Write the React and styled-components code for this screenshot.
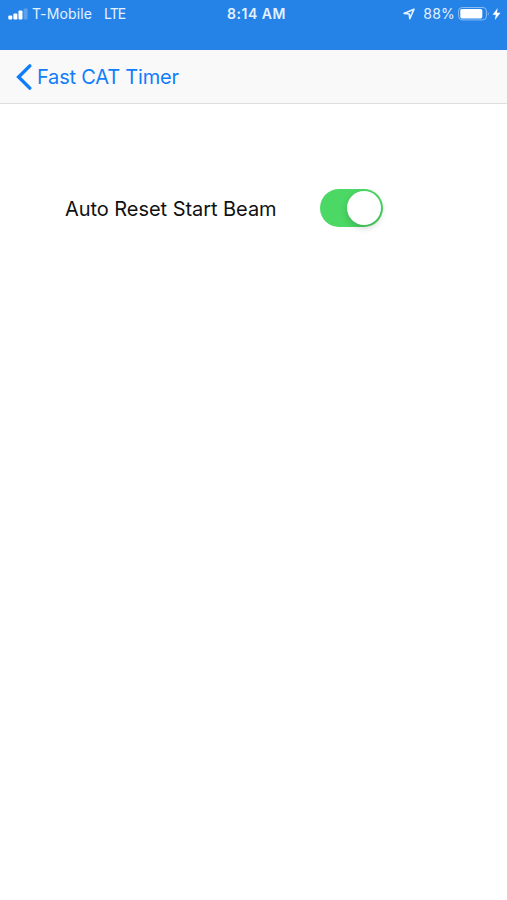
import React, { useState } from "react";
import styled, { createGlobalStyle } from "styled-components";

const palette = {
  bar: "#2583e8",
  tint: "#107efa",
  green: "#4bd865",
  nav: "#f9f9f9",
  line: "#dedede",
};

const GlobalStyle = createGlobalStyle`
  * {
    box-sizing: border-box;
  }
  body {
    margin: 0;
    background-color: #fff;
    font-family: Inter, "Liberation Sans", sans-serif;
  }
`;

const Screen = styled.div`
  display: flex;
  flex-direction: column;
  height: 900px;
  overflow: hidden;
  background-color: #fff;
`;

const StatusBar = styled.header`
  display: grid;
  grid-template-columns: 1fr auto 1fr;
  align-items: start;
  height: 50px;
  padding: 4px 6px 0 8px;
  background-color: ${palette.bar};
  color: #e4f1ff;
  font-size: 14px;
  line-height: 20px;
`;

const StatusGroup = styled.div`
  display: flex;
  align-items: center;
  justify-content: ${(props) => (props.$end ? "flex-end" : "flex-start")};
  height: 20px;
`;

const StatusText = styled.span`
  margin-left: ${(props) => props.$left || 0}px;
  letter-spacing: ${(props) => props.$spacing || 0}px;
  white-space: nowrap;
`;

const Clock = styled.time`
  padding-left: 4px;
  font-weight: 600;
  letter-spacing: 0.5px;
`;

const StatusIcon = styled.svg`
  display: block;
  flex: none;
  margin-left: ${(props) => props.$left || 0}px;
`;

const NavBar = styled.nav`
  display: flex;
  align-items: center;
  height: 54px;
  padding-left: 16px;
  background-color: ${palette.nav};
  border-bottom: 1px solid ${palette.line};
`;

const BackButton = styled.button`
  display: flex;
  align-items: center;
  gap: 5px;
  padding: 0;
  border: 0;
  background: none;
  color: ${palette.tint};
  font: inherit;
  font-size: 20px;
  line-height: 28px;
  letter-spacing: -0.2px;
  cursor: pointer;
`;

const Content = styled.main`
  flex: 1;
  padding: 85px 0 0 65px;
`;

const SettingRow = styled.div`
  display: flex;
  align-items: center;
  height: 38px;
`;

const SettingLabel = styled.span`
  width: 255px;
  padding-top: 2px;
  color: #111;
  font-size: 20px;
  line-height: 24px;
  letter-spacing: -0.05px;
  white-space: nowrap;
`;

const Switch = styled.button`
  display: flex;
  align-items: center;
  justify-content: ${(props) => (props.$on ? "flex-end" : "flex-start")};
  width: 62.5px;
  height: 38px;
  padding: 2px;
  border: 0;
  border-radius: 19px;
  background-color: ${(props) => (props.$on ? palette.green : "#e5e5e5")};
  cursor: pointer;
`;

const Knob = styled.span`
  width: 34px;
  height: 34px;
  border-radius: 50%;
  background-color: #fff;
  box-shadow: 0 3px 7px rgba(0, 0, 0, 0.18);
`;

function SignalIcon() {
  return (
    <StatusIcon width="20" height="12" viewBox="0 0 20 12" fill="#fff">
      <rect x="0.3" y="7.5" width="4" height="4" rx="1" />
      <rect x="5.4" y="5.5" width="4" height="6" rx="1" />
      <rect x="10.5" y="2.5" width="4" height="9" rx="1" />
      <rect x="15.6" y="0.5" width="4" height="11" rx="1" opacity="0.25" />
    </StatusIcon>
  );
}

function LocationIcon() {
  return (
    <StatusIcon width="12" height="12" viewBox="0 0 12 12">
      <path
        d="M1 5.4 L11 1.2 L6.8 10.6 L6.2 6 Z"
        fill="none"
        stroke="#e4f1ff"
        strokeWidth="1.6"
        strokeLinejoin="round"
      />
    </StatusIcon>
  );
}

function BatteryIcon() {
  return (
    <StatusIcon $left={3} width="32" height="14" viewBox="0 0 32 14">
      <rect
        x="0.6"
        y="0.5"
        width="27.8"
        height="12.4"
        rx="3.5"
        fill="none"
        stroke="#8abdf5"
        strokeWidth="1"
      />
      <rect x="2.3" y="2" width="22" height="9.4" rx="1.6" fill="#fff" />
      <path d="M29.8 4.5 Q31.6 6.7 29.8 8.9 Z" fill="#8abdf5" />
    </StatusIcon>
  );
}

function BoltIcon() {
  return (
    <StatusIcon $left={2} width="9" height="12" viewBox="0 0 9 13">
      <path d="M5.8 0 L0.2 7.4 H3.7 L2.8 13 L8.8 5.2 H5 Z" fill="#fff" />
    </StatusIcon>
  );
}

function ChevronIcon() {
  return (
    <StatusIcon width="16" height="26" viewBox="0 0 16 26">
      <path
        d="M13.8 1.9 L2.6 13 L13.8 24.1"
        fill="none"
        stroke={palette.tint}
        strokeWidth="3.4"
        strokeLinecap="round"
      />
    </StatusIcon>
  );
}

function App() {
  const [autoReset, setAutoReset] = useState(true);

  return (
    <>
      <GlobalStyle />
      <Screen>
        <StatusBar>
          <StatusGroup>
            <SignalIcon />
            <StatusText $left={4} $spacing={0.12}>
              T-Mobile
            </StatusText>
            <StatusText $left={12} $spacing={-0.9}>
              LTE
            </StatusText>
          </StatusGroup>
          <Clock>8:14 AM</Clock>
          <StatusGroup $end>
            <LocationIcon />
            <StatusText $left={8} $spacing={0.2}>
              88%
            </StatusText>
            <BatteryIcon />
            <BoltIcon />
          </StatusGroup>
        </StatusBar>
        <NavBar>
          <BackButton>
            <ChevronIcon />
            Fast CAT Timer
          </BackButton>
        </NavBar>
        <Content>
          <SettingRow>
            <SettingLabel>Auto Reset Start Beam</SettingLabel>
            <Switch
              role="switch"
              aria-checked={autoReset}
              aria-label="Auto Reset Start Beam"
              $on={autoReset}
              onClick={() => setAutoReset(!autoReset)}
            >
              <Knob />
            </Switch>
          </SettingRow>
        </Content>
      </Screen>
    </>
  );
}

export default App;
